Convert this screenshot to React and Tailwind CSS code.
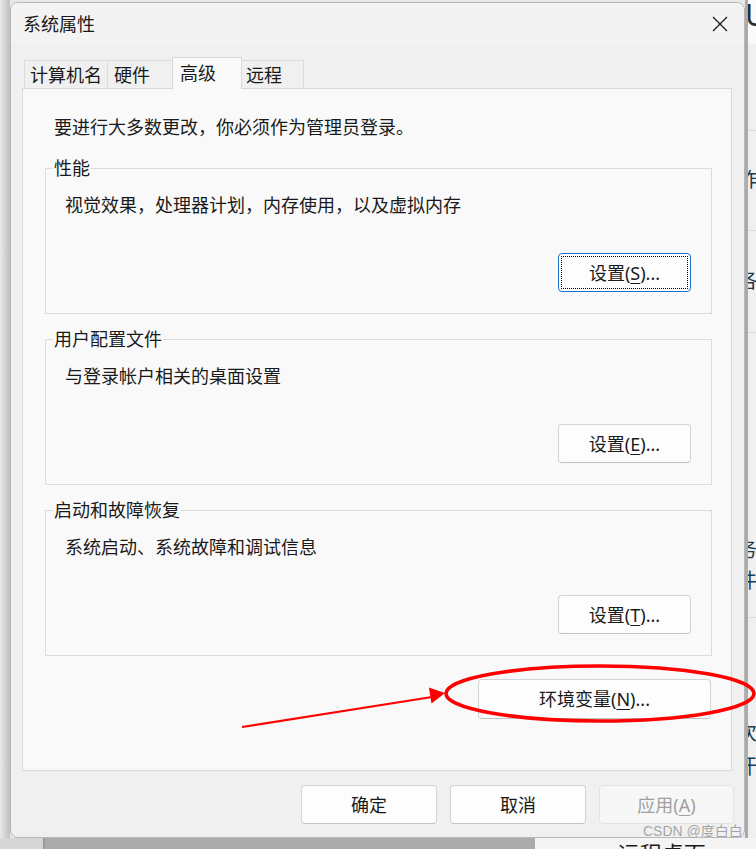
import React from "react";

const Btn = ({ className = "", children }) => (
  <button
    type="button"
    className={`flex items-center justify-center rounded-[4px] border text-[18px] leading-[24px] ${className}`}
  >
    {children}
  </button>
);

const Key = ({ children }) => (
  <span className="underline decoration-1 underline-offset-[3px]">{children}</span>
);

const Group = ({ title, desc, button, focused, className = "" }) => (
  <fieldset className={`w-[667px] border border-[#dcdcdc] pr-[20px] pb-[21px] pl-[7px] ${className}`}>
    <legend className="px-[1px] leading-[24px]">{title}</legend>
    <div className="mt-[13px] ml-[12px] leading-[24px]">{desc}</div>
    <div className="mt-[36px] flex justify-end">
      {focused ? (
        <Btn className="h-[39px] w-[133px] border-[#1f6fc6] bg-[#fdfdfd] outline-1 outline-offset-[-4px] outline-black outline-dotted">
          {button}
        </Btn>
      ) : (
        <Btn className="h-[39px] w-[133px] border-[#d3d3d3] border-b-[#c2c2c2] bg-[#fdfdfd]">{button}</Btn>
      )}
    </div>
  </fieldset>
);

export default function App() {
  return (
    <div className="relative flex h-[849px] w-[756px] flex-col overflow-hidden bg-[#e8e8e8] font-['Noto_Sans','Noto_Sans_CJK_SC',sans-serif] text-[18px] text-[#1a1a1a]">
      <div className="flex h-[838px]">
        {/* left edge of the desktop */}
        <div className="w-[10px] bg-linear-to-r from-[#e9e9e9] to-[#bfbfbf]" />

        {/* dialog */}
        <div className="w-[735px] pt-[2px]">
          <div className="flex h-[836px] flex-col overflow-hidden rounded-[8px] border border-[#b7b7b7] bg-[#f0f0f0]">
            <div className="flex h-[41px] items-center justify-between bg-[#f3f3f3] pr-[16px] pl-[12px]">
              <span className="leading-[24px]">系统属性</span>
              <svg width="16" height="16" viewBox="0 0 16 16">
                <path d="M1 1 L15 15 M15 1 L1 15" stroke="#1a1a1a" strokeWidth="1.3" fill="none" />
              </svg>
            </div>

            <div className="flex flex-col pl-[11px]">
              {/* tabs */}
              <div className="mt-[13px] ml-[2px] flex h-[31px] items-end">
                <div className="flex h-[28px] w-[84px] items-center border border-b-0 border-[#dcdcdc] bg-[#f0f0f0] pt-[2px] pl-[5px]">
                  计算机名
                </div>
                <div className="-ml-px flex h-[28px] w-[66px] items-center border border-b-0 border-[#dcdcdc] bg-[#f0f0f0] pt-[2px] pl-[6px]">
                  硬件
                </div>
                <div className="relative z-10 -mb-px -ml-px flex h-[32px] w-[70px] items-center border border-b-0 border-[#d9d9d9] bg-[#f9f9f9] pl-[7px]">
                  高级
                </div>
                <div className="-ml-px flex h-[28px] w-[63px] items-center border border-b-0 border-[#dcdcdc] bg-[#f0f0f0] pt-[2px] pl-[4px]">
                  远程
                </div>
              </div>

              {/* panel */}
              <div className="h-[683px] w-[710px] border border-[#d9d9d9] bg-[#f9f9f9] pt-[26px] pl-[22px]">
                <p className="ml-[9px] leading-[24px]">要进行大多数更改，你必须作为管理员登录。</p>
                <Group
                  className="mt-[17px]"
                  title="性能"
                  desc="视觉效果，处理器计划，内存使用，以及虚拟内存"
                  focused
                  button={<>设置(<Key>S</Key>)...</>}
                />
                <Group
                  className="mt-[13px]"
                  title="用户配置文件"
                  desc="与登录帐户相关的桌面设置"
                  button={<>设置(<Key>E</Key>)...</>}
                />
                <Group
                  className="mt-[13px]"
                  title="启动和故障恢复"
                  desc="系统启动、系统故障和调试信息"
                  button={<>设置(<Key>T</Key>)...</>}
                />
                <div className="mt-[23px] flex w-[667px] justify-end">
                  <Btn className="mr-[1px] h-[40px] w-[233px] border-[#d3d3d3] border-b-[#c2c2c2] bg-[#fdfdfd]">
                    环境变量(<Key>N</Key>)...
                  </Btn>
                </div>
              </div>

              {/* dialog buttons */}
              <div className="mt-[14px] flex justify-end gap-[13px] pr-[10px]">
                <Btn className="h-[39px] w-[136px] border-[#d3d3d3] border-b-[#c2c2c2] bg-[#fdfdfd]">确定</Btn>
                <Btn className="h-[39px] w-[136px] border-[#d3d3d3] border-b-[#c2c2c2] bg-[#fdfdfd]">取消</Btn>
                <Btn className="h-[39px] w-[135px] border-[#e3e3e3] bg-[#f7f7f7] text-[#a0a0a0]">
                  应用(<Key>A</Key>)
                </Btn>
              </div>
            </div>
          </div>
        </div>

        {/* window behind, right side */}
        <div className="flex w-[11px] flex-col overflow-hidden border-l-[3px] border-[#ababab] bg-[#f0f0f0] text-[20px] leading-[24px] text-[#1f3b4a]">
          <div className="h-[44px] bg-[#fafafa] text-[30px] leading-[30px] text-[#2b2b2b]">
            <span className="-ml-[3px] block">U</span>
          </div>
          <div className="h-[87px] border-b border-[#dadada]" />
          <div className="h-[100px] border-b border-[#dadada] pt-[37px]">
            <span className="-ml-[9px] block">作</span>
          </div>
          <div className="h-[102px] border-b border-[#dadada] pt-[38px]">
            <span className="-ml-[10px] block">各</span>
          </div>
          <div className="h-[285px] border-b border-[#dadada] pt-[205px]">
            <span className="-ml-[11px] block">务</span>
            <span className="-ml-[11px] block pt-[7px]">件</span>
          </div>
          <div className="flex-1 pt-[103px]">
            <span className="-ml-[11px] block">次</span>
            <span className="-ml-[11px] block pt-[10px]">汗</span>
          </div>
        </div>
      </div>

      {/* desktop below */}
      <div className="flex h-[11px]">
        <div className="w-[43px] bg-[#d6d6d6]" />
        <div className="w-[2px] bg-[#9a9a9a]" />
        <div className="w-[490px] bg-[#ababab]" />
        <div className="flex flex-1 bg-[#f4f4f4] pl-[50px] text-[22px] leading-[22px] text-[#1a1a1a]">
          <span className="mt-[4px]">‹</span>
          <span className="mt-[4px] ml-[26px]">远程桌面</span>
        </div>
      </div>

      {/* annotations */}
      <svg className="pointer-events-none absolute top-0 left-0" width="756" height="849" viewBox="0 0 756 849">
        <ellipse cx="600" cy="693.5" rx="154" ry="27.5" fill="none" stroke="#ff0000" strokeWidth="3.6" />
        <line x1="242" y1="727" x2="432" y2="697" stroke="#ff0000" strokeWidth="2.2" />
        <polygon points="445,693 431.5,703.5 428.9,687.6" fill="#ff0000" />
      </svg>
      <div className="pointer-events-none absolute top-[821px] left-[643px] font-['Liberation_Sans','Noto_Sans_CJK_SC',sans-serif] text-[14px] leading-[20px] text-[#a3a3a3] [text-shadow:0_0_1px_#ffffff]">
        CSDN @度白白
      </div>
    </div>
  );
}
